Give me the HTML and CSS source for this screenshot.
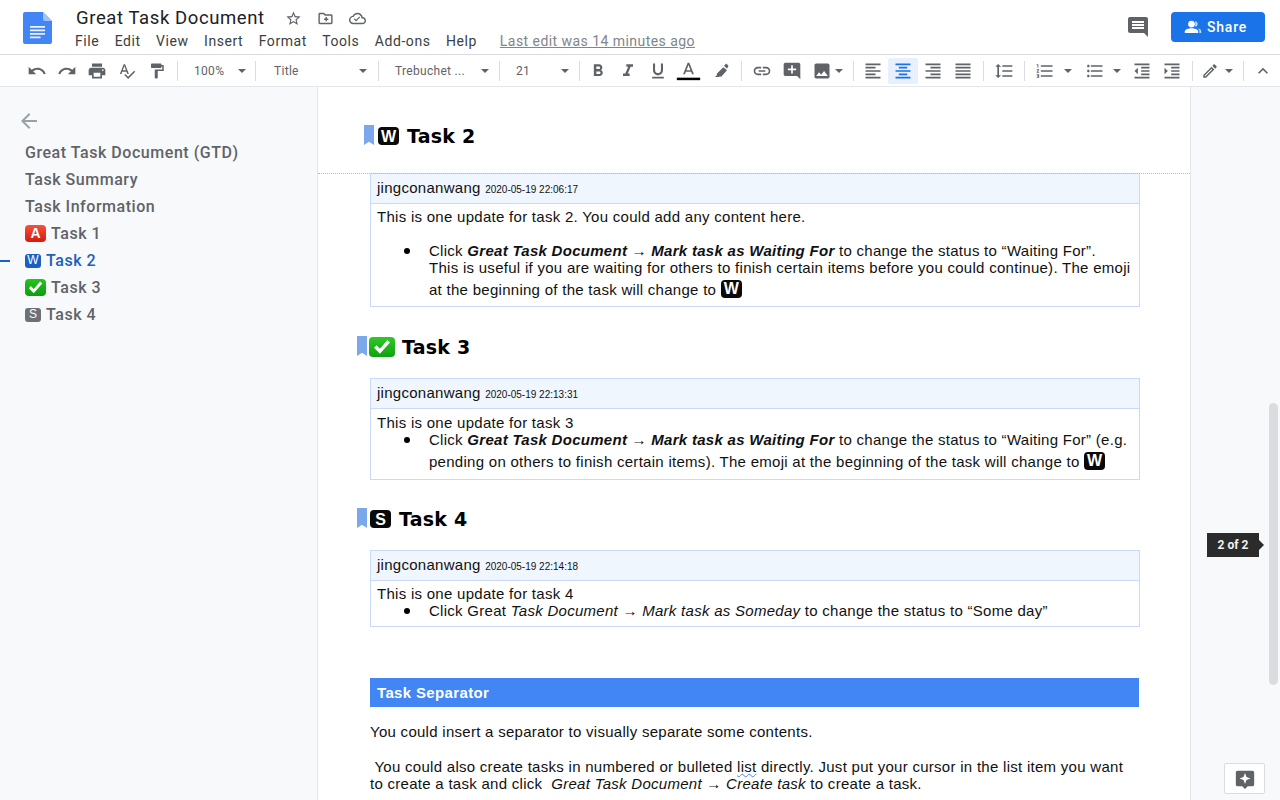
FILE: index.html
```html
<!DOCTYPE html>
<html lang="en">
<head>
    <meta charset="UTF-8">
    <title>Great Task Document - Google Docs</title>
    <link rel="stylesheet" href="styles.css">
</head>
<body>
<svg class="defs" xmlns="http://www.w3.org/2000/svg">
    <symbol id="undo" viewBox="0 0 24 24"><path d="M12.5 8c-2.65 0-5.05.99-6.9 2.6L2 7v9h9l-3.62-3.62c1.39-1.16 3.16-1.88 5.12-1.88 3.54 0 6.55 2.31 7.6 5.5l2.37-.78C21.08 11.03 17.15 8 12.5 8z"/></symbol>
    <symbol id="redo" viewBox="0 0 24 24"><path d="M18.4 10.6C16.55 8.99 14.15 8 11.5 8c-4.65 0-8.58 3.03-9.96 7.22L3.9 16c1.05-3.19 4.05-5.5 7.6-5.5 1.95 0 3.73.72 5.12 1.88L13 16h9V7l-3.6 3.6z"/></symbol>
    <symbol id="print" viewBox="0 0 24 24"><path d="M19 8H5c-1.66 0-3 1.34-3 3v6h4v4h12v-4h4v-6c0-1.66-1.34-3-3-3zm-3 11H8v-5h8v5zm3-7c-.55 0-1-.45-1-1s.45-1 1-1 1 .45 1 1-.45 1-1 1zm-1-9H6v4h12V3z"/></symbol>
    <symbol id="spell" viewBox="0 0 24 24"><path d="M12.45 16h2.09L9.43 3H7.57L2.46 16h2.09l1.12-3h5.64l1.14 3zm-6.02-5L8.5 5.48 10.57 11H6.43zm15.16.59l-8.09 8.09L9.83 16l-1.41 1.41 5.09 5.09L23 13l-1.41-1.41z"/></symbol>
    <symbol id="paint" viewBox="0 0 24 24"><path d="M18 4V3c0-.55-.45-1-1-1H5c-.55 0-1 .45-1 1v4c0 .55.45 1 1 1h12c.55 0 1-.45 1-1V6h1v4H9v11c0 .55.45 1 1 1h2c.55 0 1-.45 1-1v-9h8V4h-3z"/></symbol>
    <symbol id="bold" viewBox="0 0 24 24"><path d="M15.6 10.79c.97-.67 1.65-1.77 1.65-2.79 0-2.26-1.75-4-4-4H7v14h7.04c2.09 0 3.71-1.7 3.71-3.79 0-1.52-.86-2.82-2.15-3.42zM10 6.5h3c.83 0 1.5.67 1.5 1.5s-.67 1.5-1.5 1.5h-3v-3zm3.5 9H10v-3h3.5c.83 0 1.5.67 1.5 1.5s-.67 1.5-1.5 1.5z"/></symbol>
    <symbol id="italic" viewBox="0 0 24 24"><path d="M10 4v3h2.21l-3.42 8H6v3h8v-3h-2.21l3.42-8H18V4z"/></symbol>
    <symbol id="underline" viewBox="0 0 24 24"><path d="M12 17c3.31 0 6-2.69 6-6V3h-2.5v8c0 1.93-1.57 3.5-3.5 3.5S8.5 12.93 8.5 11V3H6v8c0 3.31 2.69 6 6 6zm-7 2v2h14v-2H5z"/></symbol>
    <symbol id="textcolor" viewBox="0 0 30 24"><path d="M14 2L8.5 16h2.25l1.12-3h6.25l1.12 3h2.25L16 2h-2zm-1.380 9L15 4.670 17.380 11h-4.760z"/><path class="black" d="M1 20h28v3H1z"/></symbol>
    <symbol id="marker" viewBox="0 0 24 24"><path d="M4 20l3-3-1-1 9-9 5 4-8 9-1-1-2 1zM16 5l3-3 3 3-2 4z"/></symbol>
    <symbol id="link" viewBox="0 0 24 24"><path d="M3.9 12c0-1.71 1.39-3.1 3.1-3.1h4V7H7c-2.76 0-5 2.24-5 5s2.24 5 5 5h4v-1.9H7c-1.71 0-3.1-1.39-3.1-3.1zM8 13h8v-2H8v2zm9-6h-4v1.9h4c1.71 0 3.1 1.39 3.1 3.1s-1.39 3.1-3.1 3.1h-4V17h4c2.76 0 5-2.24 5-5s-2.24-5-5-5z"/></symbol>
    <symbol id="addcomment" viewBox="0 0 24 24"><path d="M21.99 4c0-1.1-.89-2-1.99-2H4c-1.1 0-2 .9-2 2v12c0 1.1.9 2 2 2h14l4 4-.01-18zM17 11h-4v4h-2v-4H7V9h4V5h2v4h4v2z"/></symbol>
    <symbol id="image" viewBox="0 0 24 24"><path d="M21 19V5c0-1.1-.9-2-2-2H5c-1.1 0-2 .9-2 2v14c0 1.1.9 2 2 2h14c1.1 0 2-.9 2-2zM8.5 13.5l2.5 3.01L14.5 12l4.5 6H5l3.5-4.5z"/></symbol>
    <symbol id="left" viewBox="0 0 24 24"><path d="M15 15H3v2h12v-2zm0-8H3v2h12V7zM3 13h18v-2H3v2zm0 8h18v-2H3v2zM3 3v2h18V3H3z"/></symbol>
    <symbol id="center" viewBox="0 0 24 24"><path d="M7 15v2h10v-2H7zm-4 6h18v-2H3v2zm0-8h18v-2H3v2zm4-6v2h10V7H7zM3 3v2h18V3H3z"/></symbol>
    <symbol id="right" viewBox="0 0 24 24"><path d="M3 21h18v-2H3v2zm6-4h12v-2H9v2zm-6-4h18v-2H3v2zm6-4h12V7H9v2zM3 3v2h18V3H3z"/></symbol>
    <symbol id="justify" viewBox="0 0 24 24"><path d="M3 21h18v-2H3v2zm0-4h18v-2H3v2zm0-4h18v-2H3v2zm0-4h18V7H3v2zm0-6v2h18V3H3z"/></symbol>
    <symbol id="spacing" viewBox="0 0 24 24"><path d="M6 7h2.5L5 3.5 1.5 7H4v10H1.5L5 20.5 8.5 17H6V7zm4-2v2h12V5H10zm0 14h12v-2H10v2zm0-6h12v-2H10v2z"/></symbol>
    <symbol id="numbered" viewBox="0 0 24 24"><path d="M2 17h2v.5H3v1h1v.5H2v1h3v-4H2v1zm1-9h1V4H2v1h1v3zm-1 3h1.8L2 13.1v.9h3v-1H3.2L5 10.9V10H2v1zm5-6v2h14V5H7zm0 14h14v-2H7v2zm0-6h14v-2H7v2z"/></symbol>
    <symbol id="bulleted" viewBox="0 0 24 24"><path d="M4 10.5c-.83 0-1.5.67-1.5 1.5s.67 1.5 1.5 1.5 1.5-.67 1.5-1.5-.67-1.5-1.5-1.5zm0-6c-.83 0-1.5.67-1.5 1.5S3.17 7.5 4 7.5 5.5 6.83 5.5 6 4.83 4.5 4 4.5zm0 12c-.83 0-1.5.68-1.5 1.5s.68 1.5 1.5 1.5 1.5-.68 1.5-1.5-.67-1.5-1.5-1.5zM7 19h14v-2H7v2zm0-6h14v-2H7v2zm0-8v2h14V5H7z"/></symbol>
    <symbol id="outdent" viewBox="0 0 24 24"><path d="M11 17h10v-2H11v2zm-8-5l4 4V8l-4 4zm0 9h18v-2H3v2zM3 3v2h18V3H3zm8 6h10V7H11v2zm0 4h10v-2H11v2z"/></symbol>
    <symbol id="indent" viewBox="0 0 24 24"><path d="M3 21h18v-2H3v2zM3 8v8l4-4-4-4zm8 9h10v-2H11v2zM3 3v2h18V3H3zm8 6h10V7H11v2zm0 4h10v-2H11v2z"/></symbol>
    <symbol id="pen" viewBox="0 0 24 24"><path d="M14.06 9.02l.92.92L5.92 19H5v-.92l9.06-9.06M17.66 3c-.25 0-.51.1-.7.29l-1.83 1.83 3.75 3.75 1.83-1.83c.39-.39.39-1.02 0-1.41l-2.34-2.34c-.2-.2-.45-.29-.71-.29zm-3.6 3.19L3 17.25V21h3.75L17.81 9.94l-3.75-3.75z"/></symbol>
    <symbol id="chevron" viewBox="0 0 24 24"><path d="M12 8l-6 6 1.41 1.41L12 10.83l4.59 4.58L18 14z"/></symbol>
    <symbol id="star" viewBox="0 0 24 24"><path d="M22 9.24l-7.19-.62L12 2 9.19 8.63 2 9.24l5.46 4.73L5.82 21 12 17.27 18.18 21l-1.63-7.03L22 9.24zM12 15.4l-3.76 2.27 1-4.28-3.32-2.88 4.38-.38L12 6.1l1.71 4.04 4.38.38-3.32 2.88 1 4.28L12 15.4z"/></symbol>
    <symbol id="folder" viewBox="0 0 24 24"><path d="M20 6h-8l-2-2H4c-1.1 0-2 .9-2 2v12c0 1.1.9 2 2 2h16c1.1 0 2-.9 2-2V8c0-1.1-.9-2-2-2zm0 12H4V6h5.17l2 2H20v10zm-10-4h2v2h2v-2h2v-2h-2v-2h-2v2h-2v2z"/></symbol>
    <symbol id="cloud" viewBox="0 0 24 24"><path d="M19.35 10.04C18.67 6.59 15.64 4 12 4 9.11 4 6.6 5.64 5.35 8.04 2.34 8.36 0 10.91 0 14c0 3.31 2.69 6 6 6h13c2.76 0 5-2.24 5-5 0-2.64-2.05-4.78-4.65-4.96zM19 18H6c-2.21 0-4-1.79-4-4 0-2.05 1.53-3.76 3.56-3.97l1.07-.11.5-.95C8.08 7.14 9.94 6 12 6c2.62 0 4.88 1.86 5.39 4.43l.3 1.5 1.53.11c1.56.1 2.78 1.41 2.78 2.96 0 1.65-1.35 3-3 3zm-9-1.8l-3.2-3.2 1.2-1.2 2 2 4.6-4.6 1.2 1.2z"/></symbol>
    <symbol id="comments" viewBox="0 0 24 24"><path d="M21.99 4c0-1.1-.89-2-1.99-2H4c-1.1 0-2 .9-2 2v12c0 1.1.9 2 2 2h14l4 4-.01-18zM18 14H6v-2h12v2zm0-3H6V9h12v2zm0-3H6V6h12v2z"/></symbol>
    <symbol id="people" viewBox="0 0 24 24"><circle cx="10" cy="8" r="4.5"/><path d="M1 20v-2c0-3 5-4.5 9-4.5s9 1.5 9 4.5v2z"/><path d="M15 4c2 .4 3.2 2.1 3.2 4s-1.2 3.6-3.2 4zM18 13.5c3 .5 5 1.9 5 4.500v2h-2.500v-2c0-1.800-1-3.300-2.500-4.500z" opacity=".7"/></symbol>
    <symbol id="sparkcomment" viewBox="0 0 24 24"><path d="M4 3h16c1.100 0 2 .9 2 2v13c0 1.100-.9 2-2 2h-5l-3 3-3-3H4c-1.100 0-2-.9-2-2V5c0-1.100.9-2 2-2zm8 2.500l-1.600 4.400L6 11.500l4.400 1.600 1.600 4.400 1.600-4.400 4.400-1.600-4.400-1.600z"/></symbol>
    <symbol id="back" viewBox="0 0 24 24"><path d="M20 11H7.830l5.590-5.590L12 4l-8 8 8 8 1.410-1.410L7.830 13H20v-2z"/></symbol>
    <symbol id="tick" viewBox="0 0 24 24"><path d="M9.500 20L2.500 13l3-3 4 4L18.500 3.500l3 3z"/></symbol>
</svg>

<header class="topbar">
    <svg class="doc-logo" viewBox="0 0 29 32">
        <path fill="#4285f4" d="M2 0h18l9 9v21a2 2 0 0 1-2 2H2a2 2 0 0 1-2-2V2a2 2 0 0 1 2-2z"/>
        <path fill="#a1c2fa" d="M20 0l9 9h-7a2 2 0 0 1-2-2z"/>
        <path fill="#f1f1f1" d="M7 14h15v1.700H7zM7 17.500h15v1.700H7zM7 21h15v1.700H7zM7 24.500h10.500v1.700H7z"/>
    </svg>
    <div class="doc-head">
        <div class="title-row">
            <span class="doc-title">Great Task Document</span>
            <svg class="title-ico"><use href="#star"/></svg>
            <svg class="title-ico"><use href="#folder"/></svg>
            <svg class="title-ico"><use href="#cloud"/></svg>
        </div>
        <nav class="menu">
            <a>File</a><a>Edit</a><a>View</a><a>Insert</a><a>Format</a><a>Tools</a><a>Add-ons</a><a>Help</a>
            <a class="last-edit">Last edit was 14 minutes ago</a>
        </nav>
    </div>
    <svg class="comment-ico"><use href="#comments"/></svg>
    <button class="share"><svg class="share-ico"><use href="#people"/></svg>Share</button>
</header>

<div class="toolbar">
    <button class="tb"><svg><use href="#undo"/></svg></button>
    <button class="tb"><svg><use href="#redo"/></svg></button>
    <button class="tb"><svg><use href="#print"/></svg></button>
    <button class="tb sm"><svg><use href="#spell"/></svg></button>
    <button class="tb sm"><svg><use href="#paint"/></svg></button>
    <i class="sep sep-first"></i>
    <div class="pick pick-zoom"><span>100%</span><b class="caret"></b></div>
    <i class="sep flush"></i>
    <div class="pick pick-style"><span>Title</span><b class="caret"></b></div>
    <i class="sep flush"></i>
    <div class="pick pick-font"><span>Trebuchet ...</span><b class="caret"></b></div>
    <i class="sep flush"></i>
    <div class="pick pick-size"><span>21</span><b class="caret"></b></div>
    <i class="sep flush"></i>
    <button class="tb lead"><svg><use href="#bold"/></svg></button>
    <button class="tb"><svg><use href="#italic"/></svg></button>
    <button class="tb"><svg><use href="#underline"/></svg></button>
    <button class="tb"><svg class="wide"><use href="#textcolor"/></svg></button>
    <button class="tb nudge sm"><svg><use href="#marker"/></svg></button>
    <i class="sep"></i>
    <button class="tb"><svg><use href="#link"/></svg></button>
    <button class="tb"><svg><use href="#addcomment"/></svg></button>
    <button class="tb"><svg><use href="#image"/></svg></button>
    <b class="caret caret-image"></b>
    <i class="sep sep-image"></i>
    <button class="tb"><svg><use href="#left"/></svg></button>
    <button class="tb on"><svg><use href="#center"/></svg></button>
    <button class="tb"><svg><use href="#right"/></svg></button>
    <button class="tb"><svg><use href="#justify"/></svg></button>
    <i class="sep"></i>
    <button class="tb"><svg><use href="#spacing"/></svg></button>
    <i class="sep"></i>
    <button class="tb"><svg><use href="#numbered"/></svg></button>
    <b class="caret caret-num"></b>
    <button class="tb"><svg><use href="#bulleted"/></svg></button>
    <b class="caret caret-bul"></b>
    <button class="tb"><svg><use href="#outdent"/></svg></button>
    <button class="tb"><svg><use href="#indent"/></svg></button>
    <i class="sep sep-pen"></i>
    <button class="tb sm"><svg><use href="#pen"/></svg></button>
    <b class="caret"></b>
    <i class="sep sep-last"></i>
    <button class="tb"><svg><use href="#chevron"/></svg></button>
</div>

<main class="workspace">
    <aside class="outline">
        <svg class="back"><use href="#back"/></svg>
        <ul class="outline-list">
            <li>Great Task Document (GTD)</li>
            <li>Task Summary</li>
            <li>Task Information</li>
            <li><span class="emoji big red">A</span>Task 1</li>
            <li class="current"><span class="emoji small blue">W</span>Task 2</li>
            <li><span class="emoji big green"><svg><use href="#tick"/></svg></span>Task 3</li>
            <li><span class="emoji small gray">S</span>Task 4</li>
        </ul>
    </aside>

    <section class="page">
        <div class="page-break"></div>

        <h2 class="task-head head-2"><i class="mark"></i><span class="emoji head-badge">W</span>Task 2</h2>
        <div class="update">
            <div class="update-head">jingconanwang <small>2020-05-19 22:06:17</small></div>
            <div class="update-body">
                <p class="gap">This is one update for task 2. You could add any content here.</p>
                <ul>
                    <li><div>
                        <span class="line">Click <em>Great Task Document → Mark task as Waiting For</em> to change the status to “Waiting For”.</span>
                        <span class="line">This is useful if you are waiting for others to finish certain items before you could continue). The emoji</span>
                        <span class="line tall">at the beginning of the task will change to <span class="emoji inline-badge">W</span></span>
                    </div></li>
                </ul>
            </div>
        </div>

        <h2 class="task-head head-3"><i class="mark"></i><span class="emoji check-badge"><svg><use href="#tick"/></svg></span>Task 3</h2>
        <div class="update">
            <div class="update-head">jingconanwang <small>2020-05-19 22:13:31</small></div>
            <div class="update-body body-3">
                <p>This is one update for task 3</p>
                <ul>
                    <li><div>
                        <span class="line">Click <em>Great Task Document → Mark task as Waiting For</em> to change the status to “Waiting For” (e.g.</span>
                        <span class="line tall">pending on others to finish certain items). The emoji at the beginning of the task will change to <span class="emoji inline-badge">W</span></span>
                    </div></li>
                </ul>
            </div>
        </div>

        <h2 class="task-head head-4"><i class="mark"></i><span class="emoji head-badge">S</span>Task 4</h2>
        <div class="update">
            <div class="update-head">jingconanwang <small>2020-05-19 22:14:18</small></div>
            <div class="update-body body-4">
                <p>This is one update for task 4</p>
                <ul>
                    <li><div>
                        <span class="line">Click Great <i>Task Document → Mark task as Someday</i> to change the status to “Some day”</span>
                    </div></li>
                </ul>
            </div>
        </div>

        <div class="separator">Task Separator</div>

        <p class="doc-text">You could insert a separator to visually separate some contents.</p>
        <p class="doc-text second">
            <span class="line">&nbsp;You could also create tasks in numbered or bulleted <span class="squiggle">list</span> directly. Just put your cursor in the list item you want</span>
            <span class="line">to create a task and click &nbsp;<i>Great Task Document → Create task</i> to create a task.</span>
        </p>
    </section>

    <aside class="gutter">
        <div class="scroll-thumb"></div>
        <div class="page-tip">2 of 2</div>
        <button class="add-comment"><svg><use href="#sparkcomment"/></svg></button>
    </aside>
</main>
</body>
</html>
```

FILE: styles.css
```css
* {
    box-sizing: border-box;
}
html, body {
    height: 100%;
}
body {
    margin: 0;
    overflow: hidden;
    font-family: 'Roboto', sans-serif;
    color: #5f6368;
    background-color: #f8f9fa;
}
.defs {
    display: none;
}
svg {
    fill: currentColor;
}
.black {
    fill: #000;
}

/* title bar */
.topbar {
    display: flex;
    height: 55px;
    padding-left: 23px;
    background-color: #fff;
    border-bottom: 1px solid #dadce0;
}
.doc-logo {
    width: 29px;
    height: 32px;
    margin-top: 12px;
}
.doc-head {
    margin-left: 24px;
    flex: 1;
}
.title-row {
    display: flex;
    align-items: center;
    height: 22px;
    margin-top: 7px;
    color: #5f6368;
}
.doc-title {
    font-size: 18.5px;
    letter-spacing: 0.6px;
    color: #202124;
    margin-right: 20px;
}
.title-ico {
    width: 17px;
    height: 17px;
    margin-right: 15px;
}
.menu {
    display: flex;
    margin-top: 3px;
    margin-left: -1px;
    font-size: 14px;
    line-height: 18px;
    letter-spacing: 0.55px;
    color: #3c4043;
}
.menu a {
    margin-right: 15.5px;
}
.menu .last-edit {
    margin-left: 7.5px;
    letter-spacing: 0.45px;
    color: #80868b;
    text-decoration: underline;
}
.comment-ico {
    width: 24px;
    height: 24px;
    margin: 15px 21px 0 0;
    color: #5f6368;
}
.share {
    display: flex;
    align-items: center;
    gap: 5px;
    width: 94px;
    height: 30px;
    margin: 12px 15px 0 0;
    padding: 0 0 0 13px;
    border: none;
    border-radius: 4px;
    background-color: #1a73e8;
    color: #fff;
    font-family: 'Roboto', sans-serif;
    font-size: 14px;
    font-weight: 500;
    letter-spacing: 0.8px;
}
.share-ico {
    width: 18px;
    height: 18px;
}

/* toolbar */
.toolbar {
    display: flex;
    align-items: center;
    height: 32px;
    padding-left: 22px;
    padding-top: 1px;
    background-color: #fff;
    border-bottom: 1px solid #e3e5e8;
    color: #5f6368;
}
.tb {
    display: flex;
    align-items: center;
    justify-content: center;
    flex: none;
    width: 30px;
    height: 26px;
    padding: 0;
    border: none;
    border-radius: 2px;
    background: none;
    color: #5f6368;
}
.tb svg {
    width: 20px;
    height: 20px;
}
.tb svg.wide {
    width: 25px;
}
.tb.sm svg {
    width: 18px;
    height: 18px;
}
.tb.on {
    background-color: #e8f0fe;
    color: #1a73e8;
}
.tb.lead {
    margin-left: 3px;
}
.tb.nudge {
    margin: 0 0 0 3px;
}
.sep {
    flex: none;
    width: 1px;
    height: 20px;
    margin: 0 5px;
    background-color: #dadce0;
}
.sep.flush {
    margin: 0;
}
.sep.sep-first {
    margin-right: 0;
}
.sep.sep-image {
    margin: 0 4px 0 10px;
}
.sep.sep-pen {
    margin-right: 2px;
}
.sep.sep-last {
    margin: 0 4.5px 0 9.5px;
}
.pick {
    display: flex;
    align-items: center;
    justify-content: space-between;
    flex: none;
    font-size: 12px;
    letter-spacing: 0.3px;
    color: #5f6368;
}
.pick-zoom {
    width: 77px;
    padding: 0 9px 0 16px;
}
.pick-style {
    width: 122px;
    padding: 0 11px 0 18px;
}
.pick-font {
    width: 120px;
    padding: 0 10px 0 16px;
}
.pick-size {
    width: 79px;
    padding: 0 10px 0 16px;
}
.caret {
    flex: none;
    width: 0;
    height: 0;
    border-left: 4.5px solid transparent;
    border-right: 4.5px solid transparent;
    border-top: 4.5px solid #5f6368;
}
.caret.caret-image {
    margin-left: -2px;
}
.caret.caret-num {
    margin: 0 8.5px 0 3.5px;
}
.caret.caret-bul {
    margin: 0 6px 0 3px;
}

/* main area */
.workspace {
    display: flex;
    height: 713px;
}
.outline {
    flex: none;
    width: 318px;
    padding-top: 22px;
}
.back {
    display: block;
    width: 24px;
    height: 24px;
    margin-left: 17px;
    color: #9aa0a6;
}
.outline-list {
    list-style: none;
    margin: 6px 0 0;
    padding: 0 0 0 25px;
    font-size: 16px;
    font-weight: 500;
    letter-spacing: 0.54px;
    line-height: 27px;
    color: #5f6368;
}
.outline-list li {
    position: relative;
    display: flex;
    align-items: center;
    height: 27px;
}
.outline-list .current {
    color: #1a5fc4;
}
.outline-list .current::before {
    content: "";
    position: absolute;
    left: -25px;
    top: 13px;
    width: 10px;
    height: 1.5px;
    background-color: #1a5fc4;
}
.emoji {
    display: inline-flex;
    align-items: center;
    justify-content: center;
    flex: none;
    font-family: 'Liberation Sans', sans-serif;
    font-weight: 700;
    letter-spacing: 0;
    color: #fff;
    border-radius: 3px;
}
.emoji svg {
    fill: #fff;
}
.emoji.big {
    width: 21px;
    height: 17px;
    margin-right: 5px;
    font-size: 14px;
    border-radius: 4px;
}
.emoji.big svg {
    width: 17px;
    height: 17px;
}
.emoji.small {
    width: 16px;
    height: 14px;
    margin-right: 5px;
    font-size: 12px;
    font-weight: 400;
}
.red {
    background: linear-gradient(#f4523b, #d41a0e);
}
.green {
    background: linear-gradient(#24c51e, #0f9c10);
}
.blue {
    background-color: #1a5fc4;
}
.gray {
    background-color: #6d7074;
}

/* document page */
.page {
    position: relative;
    flex: none;
    width: 872px;
    padding-top: 38px;
    overflow: hidden;
    background-color: #fff;
    box-shadow: 0 0 0 1px #e4e6e9;
    font-family: 'Liberation Sans', sans-serif;
    font-size: 15px;
    line-height: 17px;
    letter-spacing: 0.28px;
    color: #111;
}
.page-break {
    position: absolute;
    left: 0;
    right: 0;
    top: 86px;
    border-top: 1px dotted #b8bbbf;
}
.task-head {
    display: flex;
    align-items: center;
    height: 22px;
    margin: 0;
    font-family: 'DejaVu Sans', sans-serif;
    font-size: 19px;
    font-weight: 700;
    letter-spacing: 0.2px;
    color: #000;
}
.head-2 {
    padding-left: 46px;
    margin-bottom: 26px;
}
.head-3 {
    padding-left: 39px;
    margin: 29px 0 20px;
}
.head-4 {
    padding-left: 39px;
    margin: 28px 0 20px;
}
.mark {
    flex: none;
    align-self: flex-start;
    width: 10px;
    height: 20px;
    margin-right: 4px;
    background-color: #7ba7ec;
    clip-path: polygon(0 0, 100% 0, 100% 100%, 50% 84%, 0 100%);
}
.head-3 .mark, .head-4 .mark {
    margin-right: 2px;
}
.head-badge {
    width: 21px;
    height: 18px;
    margin-right: 8px;
    background-color: #0a0a0a;
    border-radius: 4px;
    font-size: 16px;
}
.head-4 .head-badge {
    margin-left: 1px;
    margin-right: 8px;
}
.check-badge {
    width: 26px;
    height: 20px;
    margin-right: 7px;
    background: linear-gradient(#2fc926, #10a012);
    border-radius: 4px;
}
.check-badge svg {
    width: 20px;
    height: 20px;
}
.inline-badge {
    width: 21px;
    height: 18px;
    background-color: #0a0a0a;
    border-radius: 4px;
    font-size: 16px;
    line-height: 18px;
    vertical-align: 1px;
}
.update {
    width: 770px;
    margin-left: 52px;
    border: 1px solid #c9daf8;
}
.update-head {
    height: 30px;
    padding: 5px 6px;
    background-color: #f0f6fe;
    border-bottom: 1px solid #c9daf8;
}
.update-head small {
    font-size: 10px;
    letter-spacing: 0;
}
.update-body {
    padding: 4px 6px 3px;
}
.update-body.body-3 {
    padding: 5px 6px 4px;
}
.update-body.body-4 {
    padding: 4px 6px 7px;
}
.update-body p {
    margin: 0;
}
.update-body .gap {
    margin-bottom: 17px;
}
.update-body ul {
    list-style: none;
    margin: 0;
    padding: 0;
}
.update-body li {
    display: grid;
    grid-template-columns: 52px 1fr;
}
.update-body li::before {
    content: "";
    width: 6px;
    height: 6px;
    margin: 6px 0 0 27px;
    border-radius: 50%;
    background-color: #000;
}
.update-body em {
    font-weight: 700;
}
.line {
    display: block;
    white-space: nowrap;
}
.line.tall {
    height: 27px;
    line-height: 27px;
}
.separator {
    width: 769px;
    height: 29px;
    margin: 51px 0 0 52px;
    padding: 6px 7px;
    background-color: #4285f4;
    color: #fff;
    font-size: 15px;
    font-weight: 700;
    letter-spacing: 0.35px;
}
.doc-text {
    margin: 16px 0 0 52px;
    white-space: nowrap;
}
.doc-text.second {
    margin-top: 18px;
}
.squiggle {
    text-decoration: underline wavy #4285f4 1px;
}

/* right gutter */
.gutter {
    position: relative;
    flex: 1;
}
.scroll-thumb {
    position: absolute;
    right: 2px;
    top: 316px;
    width: 9px;
    height: 282px;
    border-radius: 5px;
    background-color: #dadce0;
}
.page-tip {
    position: absolute;
    left: 17px;
    top: 446px;
    width: 52px;
    height: 24px;
    background-color: #2b2b2b;
    color: #f1f1f1;
    font-size: 12px;
    font-weight: 700;
    line-height: 24px;
    text-align: center;
}
.page-tip::after {
    content: "";
    position: absolute;
    left: 52px;
    top: 7px;
    border-left: 5px solid #2b2b2b;
    border-top: 5px solid transparent;
    border-bottom: 5px solid transparent;
}
.add-comment {
    position: absolute;
    left: 34px;
    top: 676px;
    display: flex;
    align-items: center;
    justify-content: center;
    width: 41px;
    height: 31px;
    padding: 0;
    border: 1px solid #dadce0;
    border-radius: 2px;
    background-color: #fff;
    color: #5f6368;
}
.add-comment svg {
    width: 22px;
    height: 22px;
}
```
